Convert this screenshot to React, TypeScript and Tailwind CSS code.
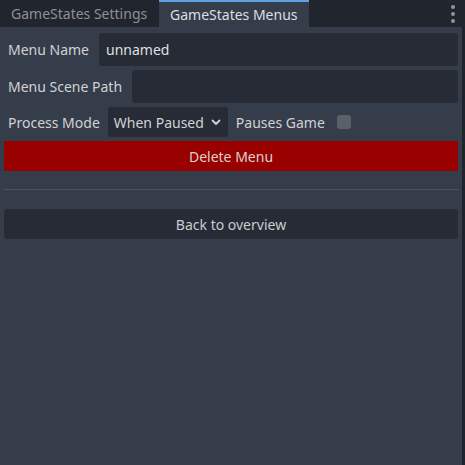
import React from "react";

function Kebab() {
  return (
    <div className="flex flex-col items-center gap-[3px] pr-[10px]">
      <span className="w-[4px] h-[4px] rounded-full bg-[#8f949b]" />
      <span className="w-[4px] h-[4px] rounded-full bg-[#8f949b]" />
      <span className="w-[4px] h-[4px] rounded-full bg-[#8f949b]" />
    </div>
  );
}

function Chevron() {
  return (
    <svg width="10" height="7" viewBox="0 0 10 7" className="ml-[7px]">
      <path d="M1.5 1.5 L5 5 L8.5 1.5" fill="none" stroke="#d0d2d5" strokeWidth="1.8" strokeLinecap="round" strokeLinejoin="round" />
    </svg>
  );
}

function Row({ label, children }: { label: string; children: React.ReactNode }) {
  return (
    <div className="flex items-center h-[33px]">
      <span className="pl-[4px] pr-[10px] whitespace-nowrap">{label}</span>
      {children}
    </div>
  );
}

export default function App() {
  return (
    <div
      className="w-[465px] h-[465px] bg-[#363d4a] flex flex-col text-[14px] text-[#d0d2d5] overflow-hidden"
      style={{ fontFamily: '"Noto Sans", sans-serif' }}
    >
      <div className="h-[27px] bg-[#21262e] flex items-stretch">
        <div className="w-[159px] flex items-center pl-[11px] text-[#8c9097]">GameStates Settings</div>
        <div className="w-[150px] flex items-center pl-[11px] bg-[#363d4a] border-t-2 border-[#5ea2e4] text-[#dcdee1]">
          GameStates Menus
        </div>
        <div className="flex-1 flex items-center justify-end">
          <Kebab />
        </div>
      </div>
      <div className="flex-1 flex">
        <div className="flex-1 flex flex-col gap-[4px] px-[4px] pt-[6px]">
          <Row label="Menu Name">
            <div className="flex-1 h-full bg-[#262b35] rounded-[3px] flex items-center pl-[7px] text-[#dfe0e2]">unnamed</div>
          </Row>
          <Row label="Menu Scene Path">
            <div className="flex-1 h-full bg-[#262b35] rounded-[3px]" />
          </Row>
          <div className="flex items-center h-[30px]">
            <span className="pl-[4px] pr-[8px] whitespace-nowrap">Process Mode</span>
            <div className="h-full bg-[#262b35] rounded-[3px] flex items-center pl-[6px] pr-[7px]">
              When Paused
              <Chevron />
            </div>
            <span className="pl-[8px] whitespace-nowrap">Pauses Game</span>
            <span className="ml-[12px] w-[14px] h-[14px] rounded-[3px] bg-[#5a606a]" />
          </div>
          <div className="h-[30px] bg-[#990000] flex items-center justify-center text-[#dccfcf]">Delete Menu</div>
          <div className="h-px bg-[#4b515c] mt-[14px] mb-[15px] -mx-[1px]" />
          <div className="h-[30px] bg-[#262b35] rounded-[3px] flex items-center justify-center text-[#c9cbce]">
            Back to overview
          </div>
        </div>
        <div className="w-[3px] bg-[#1f232a]" />
      </div>
    </div>
  );
}
